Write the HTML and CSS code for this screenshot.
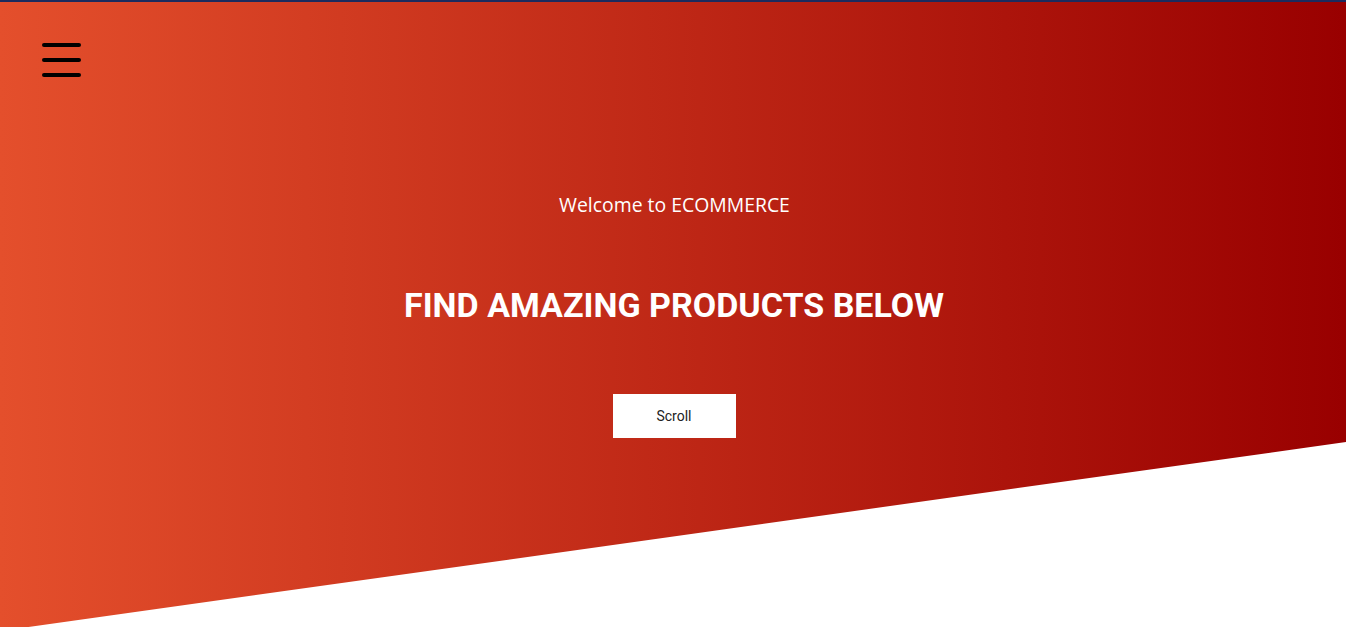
FILE: index.html
```html
<!DOCTYPE html>
<html lang="en">
<head>
<meta charset="utf-8">
<title>ECOMMERCE</title>
<link rel="stylesheet" href="styles.css">
</head>
<body>
<div class="topbar"></div>
<section class="hero">
  <button class="menu" aria-label="Menu">
    <span class="bar"></span>
    <span class="bar"></span>
    <span class="bar"></span>
  </button>
  <p class="welcome">Welcome to ECOMMERCE</p>
  <h1 class="title">FIND AMAZING PRODUCTS BELOW</h1>
  <a class="scroll" href="#products">Scroll</a>
</section>
</body>
</html>
```
FILE: styles.css
```css
html, body {
  margin: 0;
  padding: 0;
  background: #ffffff;
  overflow: hidden;
}
.topbar {
  height: 2px;
  background: #1c2b5e;
}
.hero {
  position: relative;
  height: 625px;
  background: linear-gradient(to right, #e44f2c, #990000);
  clip-path: polygon(0 0, 100% 0, 100% 440px, 0 629px);
  display: flex;
  flex-direction: column;
  align-items: center;
  box-sizing: border-box;
  padding-top: 187px;
}
.menu {
  position: absolute;
  left: 42px;
  top: 41px;
  width: 39px;
  padding: 0;
  border: 0;
  background: none;
  display: flex;
  flex-direction: column;
  gap: 11px;
  cursor: pointer;
}
.bar {
  display: block;
  height: 4px;
  width: 39px;
  background: #000;
  border-radius: 2px;
}
.welcome {
  margin: 0 0 0 3px;
  font-family: "Open Sans", sans-serif;
  font-size: 19.4px;
  color: #fff;
  line-height: 32px;
}
.title {
  margin: 63px 0 0 2px;
  font-family: Roboto, sans-serif;
  font-weight: 700;
  font-size: 34px;
  line-height: 42px;
  color: #fff;
}
.scroll {
  margin-top: 68px;
  width: 123px;
  height: 44px;
  background: #fff;
  color: #222;
  font-family: Roboto, sans-serif;
  font-size: 14px;
  text-decoration: none;
  display: flex;
  align-items: center;
  justify-content: center;
  margin-left: 2px;
}
```
